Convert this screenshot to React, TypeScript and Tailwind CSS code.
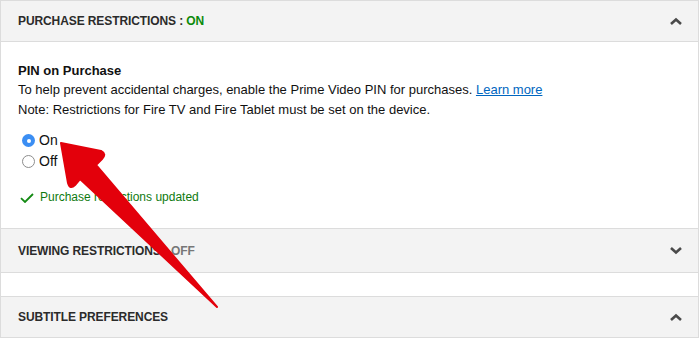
import React from 'react';

function ChevronUp() {
  return (
    <svg width="14" height="9" viewBox="0 0 14 9" className="shrink-0">
      <path d="M2 7 L7 2.5 L12 7" fill="none" stroke="#4a4a4a" strokeWidth="2.6" />
    </svg>
  );
}

function ChevronDown() {
  return (
    <svg width="14" height="9" viewBox="0 0 14 9" className="shrink-0">
      <path d="M2 2 L7 6.5 L12 2" fill="none" stroke="#4a4a4a" strokeWidth="2.6" />
    </svg>
  );
}

function SectionHeader({ children, open }: { children: React.ReactNode; open: boolean }) {
  return (
    <div className="flex items-center justify-between bg-[#f3f3f3] pl-[17px] pr-[15px]">
      <span className="text-[12px] font-bold tracking-[-0.1px] text-[#2b2b2b]">{children}</span>
      {open ? <ChevronUp /> : <ChevronDown />}
    </div>
  );
}

function Radio({ checked, label }: { checked: boolean; label: string }) {
  return (
    <label className="flex h-[21px] items-center gap-[4px]">
      {checked ? (
        <span className="flex h-[13px] w-[13px] items-center justify-center rounded-full bg-[#3b8ef3]">
          <span className="h-[4px] w-[4px] rounded-full bg-white" />
        </span>
      ) : (
        <span className="h-[13px] w-[13px] rounded-full border border-[#8d8d8d] bg-white" />
      )}
      <span className="text-[14px] text-[#111]">{label}</span>
    </label>
  );
}

export default function App() {
  return (
    <div className="relative h-[338px] w-[700px] overflow-hidden bg-white font-['Liberation_Sans',Arial,sans-serif]">
      <div className="flex h-full w-[699px] flex-col">
        <div className="flex h-[42px] shrink-0 flex-col border border-[#dcdcdc] [&>div]:flex-1">
          <SectionHeader open>
            PURCHASE RESTRICTIONS : <span className="text-[#0a8a0a]">ON</span>
          </SectionHeader>
        </div>

        <div className="flex h-[186px] shrink-0 flex-col border-x border-[#dcdcdc] pl-[17px] pt-[19px] text-[13px] leading-[19px] text-[#111]">
          <p className="font-bold">PIN on Purchase</p>
          <p>
            To help prevent accidental charges, enable the Prime Video PIN for purchases.{' '}
            <a className="text-[#0066c0] underline">Learn more</a>
          </p>
          <p className="mt-[1px]">Note: Restrictions for Fire TV and Fire Tablet must be set on the device.</p>

          <div className="mt-[11px] ml-[4px] flex flex-col">
            <Radio checked label="On" />
            <Radio checked={false} label="Off" />
          </div>

          <div className="mt-[16px] ml-[2px] flex items-center gap-[6px]">
            <svg width="14" height="10" viewBox="0 0 14 10">
              <path d="M1 5.2 L5 9 L13 1" fill="none" stroke="#138a13" strokeWidth="1.8" />
            </svg>
            <span className="text-[12px] text-[#0f7a0f]">Purchase restrictions updated</span>
          </div>
        </div>

        <div className="flex h-[45px] shrink-0 flex-col border border-[#dcdcdc] [&>div]:flex-1">
          <SectionHeader open={false}>
            VIEWING RESTRICTIONS : <span className="text-[#777]">OFF</span>
          </SectionHeader>
        </div>

        <div className="h-[23px] shrink-0 border-x border-[#dcdcdc]" />

        <div className="flex h-[42px] shrink-0 flex-col border border-[#dcdcdc] [&>div]:flex-1">
          <SectionHeader open>SUBTITLE PREFERENCES</SectionHeader>
        </div>
      </div>

      <svg className="pointer-events-none absolute left-0 top-0" width="700" height="338" viewBox="0 0 700 338">
        <path
          d="M61 143 L101 151 Q107 154 102 159 L96 165 L217 307 L80 179 L75 185 Q70 190 68 183 Z"
          fill="#e3000b"
          stroke="#e3000b"
          strokeWidth="2"
          strokeLinejoin="round"
        />
      </svg>
    </div>
  );
}
